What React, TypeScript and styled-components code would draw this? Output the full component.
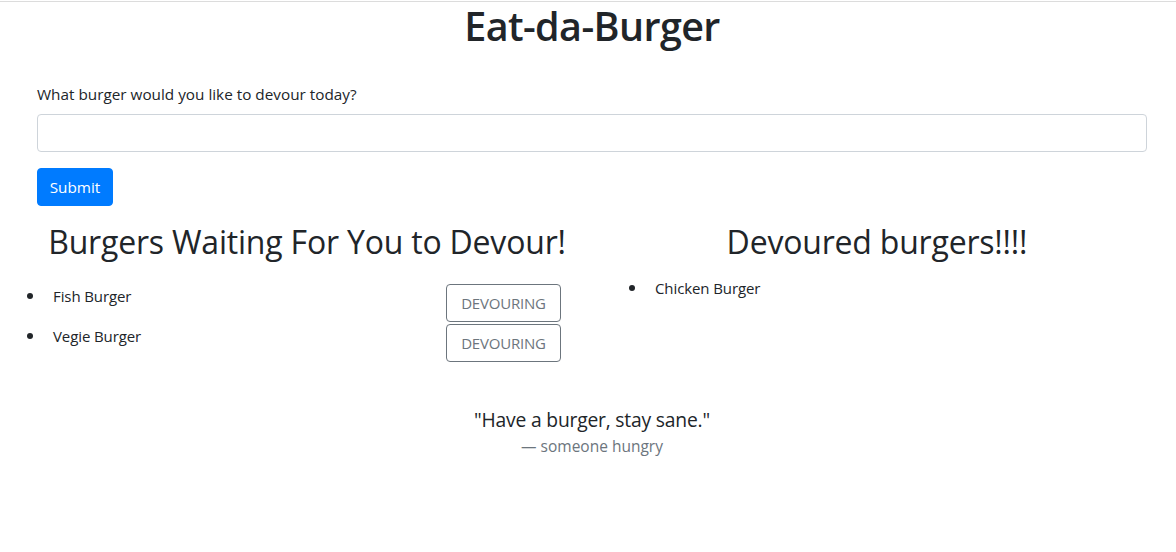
import React from "react";
import styled, { createGlobalStyle } from "styled-components";

const Global = createGlobalStyle`
  html, body { margin: 0; padding: 0; background: #fff; }
  body {
    font-family: "Open Sans", "Noto Sans", sans-serif;
    color: #212529;
    font-size: 16px;
    line-height: 1.5;
  }
  * { box-sizing: border-box; }
`;

const TopRule = styled.div`
  height: 1px;
  margin-top: 1px;
  background: #dcdcdc;
`;

const Container = styled.div`
  width: 1140px;
  margin-left: 22px;
`;

const Title = styled.h1`
  margin: 0;
  font-size: 39.5px;
  font-weight: 600;
  line-height: 48px;
  text-align: center;
  letter-spacing: -0.6px;
`;

const Form = styled.form`
  padding: 32px 15px 0;
  display: flex;
  flex-direction: column;
  align-items: flex-start;
`;

const Label = styled.label`
  font-size: 15.3px;
  line-height: 24px;
`;

const Input = styled.input`
  width: 100%;
  height: 38px;
  margin-top: 8px;
  border: 1px solid #ced4da;
  border-radius: 4px;
  font: inherit;
  padding: 6px 12px;
`;

const PrimaryButton = styled.button`
  margin-top: 16px;
  width: 76px;
  height: 38px;
  border: 1px solid #007bff;
  border-radius: 4px;
  background: #007bff;
  color: #fff;
  font-family: inherit;
  font-size: 15.3px;
  padding: 0;
`;

const Columns = styled.div`
  display: grid;
  grid-template-columns: 570px 570px;
  margin-top: 17px;
`;

const Column = styled.section`
  display: flex;
  flex-direction: column;
`;

const Heading = styled.h2`
  margin: 0;
  font-size: 32px;
  font-weight: 500;
  line-height: 38px;
  text-align: center;
  letter-spacing: -0.2px;
`;

const List = styled.ul<{ $top: number; $padL: number; $padR: number }>`
  list-style: none;
  margin: ${(p) => p.$top}px 0 0;
  padding: 0 ${(p) => p.$padR}px 0 ${(p) => p.$padL}px;
  display: flex;
  flex-direction: column;
  gap: 2px;
`;

const Item = styled.li`
  display: flex;
  align-items: flex-start;
  font-size: 15px;
  line-height: 24px;
  letter-spacing: -0.1px;
  &::before {
    content: "";
    flex: none;
    width: 6px;
    height: 6px;
    border-radius: 50%;
    background: #212529;
    margin: 9px 20px 0 0;
  }
`;

const ItemName = styled.span`
  flex: 1;
`;

const OutlineButton = styled.button`
  width: 115px;
  height: 38px;
  border: 1px solid #6c757d;
  border-radius: 4px;
  background: #fff;
  color: #6c757d;
  font-family: inherit;
  font-size: 15px;
  letter-spacing: -0.2px;
  padding: 0;
`;

const Quote = styled.blockquote`
  margin: 43px 0 0;
  text-align: center;
`;

const QuoteText = styled.p`
  margin: 0;
  font-size: 19.3px;
  line-height: 30px;
  letter-spacing: -0.2px;
`;

const QuoteFooter = styled.footer`
  font-size: 15.5px;
  line-height: 22px;
  color: #6c757d;
  letter-spacing: 0;
`;

const waiting = ["Fish Burger", "Vegie Burger"];
const devoured = ["Chicken Burger"];

export default function App() {
  return (
    <>
      <Global />
      <TopRule />
      <Container>
        <Title>Eat-da-Burger</Title>
        <Form onSubmit={(e) => e.preventDefault()}>
          <Label htmlFor="burger">What burger would you like to devour today?</Label>
          <Input id="burger" type="text" />
          <PrimaryButton type="submit">Submit</PrimaryButton>
        </Form>
        <Columns>
          <Column>
            <Heading>Burgers Waiting For You to Devour!</Heading>
            <List $top={23} $padL={5} $padR={31}>
              {waiting.map((b) => (
                <Item key={b}>
                  <ItemName>{b}</ItemName>
                  <OutlineButton type="button">DEVOURING</OutlineButton>
                </Item>
              ))}
            </List>
          </Column>
          <Column>
            <Heading>Devoured burgers!!!!</Heading>
            <List $top={15} $padL={37} $padR={0}>
              {devoured.map((b) => (
                <Item key={b}>
                  <ItemName>{b}</ItemName>
                </Item>
              ))}
            </List>
          </Column>
        </Columns>
        <Quote>
          <QuoteText>"Have a burger, stay sane."</QuoteText>
          <QuoteFooter>— someone hungry</QuoteFooter>
        </Quote>
      </Container>
    </>
  );
}
